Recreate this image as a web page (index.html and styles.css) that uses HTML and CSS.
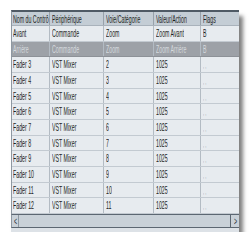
FILE: index.html
```html
<!DOCTYPE html>
<html lang="fr">
<head>
<meta charset="utf-8">
<link rel="stylesheet" href="styles.css">
</head>
<body>
<div class="window">
  <div class="table">
    <div class="row head">
      <div class="cell"><span class="t">Nom du Contrô</span></div>
      <div class="cell"><span class="t">Périphérique</span></div>
      <div class="cell"><span class="t">Voie/Catégorie</span></div>
      <div class="cell"><span class="t">Valeur/Action</span></div>
      <div class="cell"><span class="t">Flags</span></div>
    </div>
    <div class="row">
      <div class="cell"><span class="t">Avant</span></div>
      <div class="cell"><span class="t">Commande</span></div>
      <div class="cell"><span class="t">Zoom</span></div>
      <div class="cell"><span class="t">Zoom Avant</span></div>
      <div class="cell"><span class="t">B</span></div>
    </div>
    <div class="row sel">
      <div class="cell"><span class="t">Arrière</span></div>
      <div class="cell"><span class="t">Commande</span></div>
      <div class="cell"><span class="t">Zoom</span></div>
      <div class="cell"><span class="t">Zoom Arrière</span></div>
      <div class="cell"><span class="t">B</span></div>
    </div>
    <div class="row"><div class="cell"><span class="t">Fader 3</span></div><div class="cell"><span class="t">VST Mixer</span></div><div class="cell"><span class="t">2</span></div><div class="cell"><span class="t">1025</span></div><div class="cell"><span class="t f">, ,</span></div></div>
    <div class="row"><div class="cell"><span class="t">Fader 4</span></div><div class="cell"><span class="t">VST Mixer</span></div><div class="cell"><span class="t">3</span></div><div class="cell"><span class="t">1025</span></div><div class="cell"><span class="t f">, ,</span></div></div>
    <div class="row"><div class="cell"><span class="t">Fader 5</span></div><div class="cell"><span class="t">VST Mixer</span></div><div class="cell"><span class="t">4</span></div><div class="cell"><span class="t">1025</span></div><div class="cell"><span class="t f">, ,</span></div></div>
    <div class="row"><div class="cell"><span class="t">Fader 6</span></div><div class="cell"><span class="t">VST Mixer</span></div><div class="cell"><span class="t">5</span></div><div class="cell"><span class="t">1025</span></div><div class="cell"><span class="t f">, ,</span></div></div>
    <div class="row"><div class="cell"><span class="t">Fader 7</span></div><div class="cell"><span class="t">VST Mixer</span></div><div class="cell"><span class="t">6</span></div><div class="cell"><span class="t">1025</span></div><div class="cell"><span class="t f">, ,</span></div></div>
    <div class="row"><div class="cell"><span class="t">Fader 8</span></div><div class="cell"><span class="t">VST Mixer</span></div><div class="cell"><span class="t">7</span></div><div class="cell"><span class="t">1025</span></div><div class="cell"><span class="t f">, ,</span></div></div>
    <div class="row"><div class="cell"><span class="t">Fader 9</span></div><div class="cell"><span class="t">VST Mixer</span></div><div class="cell"><span class="t">8</span></div><div class="cell"><span class="t">1025</span></div><div class="cell"><span class="t f">, ,</span></div></div>
    <div class="row"><div class="cell"><span class="t">Fader 10</span></div><div class="cell"><span class="t">VST Mixer</span></div><div class="cell"><span class="t">9</span></div><div class="cell"><span class="t">1025</span></div><div class="cell"><span class="t f">, ,</span></div></div>
    <div class="row"><div class="cell"><span class="t">Fader 11</span></div><div class="cell"><span class="t">VST Mixer</span></div><div class="cell"><span class="t">10</span></div><div class="cell"><span class="t">1025</span></div><div class="cell"><span class="t f">, ,</span></div></div>
    <div class="row"><div class="cell"><span class="t">Fader 12</span></div><div class="cell"><span class="t">VST Mixer</span></div><div class="cell"><span class="t">11</span></div><div class="cell"><span class="t">1025</span></div><div class="cell"><span class="t f">, ,</span></div></div>
  </div>
  <div class="scroll">
    <div class="btn left"><span class="t">&lt;</span></div>
    <div class="track"></div>
    <div class="btn right"><span class="t">&gt;</span></div>
  </div>
</div>
</body>
</html>
```
FILE: styles.css
```css
html, body {
  margin: 0;
  padding: 0;
  background: #ffffff;
}
body {
  font-family: "Liberation Sans", Arial, sans-serif;
  font-size: 10.5px;
  color: #1c1f22;
}
.window {
  margin: 10px 0 0 11px;
  width: 228px;
  height: 222px;
  box-sizing: border-box;
  background: #dde2e7;
  box-shadow: 4px 6px 4px rgba(0, 0, 0, 0.5);
  display: flex;
  flex-direction: column;
}
.table {
  border-top: 2px solid #4f5a65;
  border-left: 1px solid #8e98a2;
}
.row {
  display: grid;
  grid-template-columns: 38px 54px 50px 47px 1fr;
  height: 15.67px;
  box-sizing: border-box;
  border-bottom: 1px solid #c3cad1;
  background: #e7ebef;
}
.row.head {
  height: 14px;
  background: #c4cdd5;
  border-bottom: 1px solid #a9b2bb;
}
.row.sel {
  background: #9da1a7;
  color: #d6dade;
  border-bottom-color: #8d9197;
}
.cell {
  border-right: 1px solid #b3bbc3;
  padding-left: 2px;
  overflow: hidden;
  white-space: nowrap;
  line-height: 15px;
}
.cell:first-child {
  padding-left: 1px;
}
.head .cell {
  line-height: 14px;
  border-right-color: #98a1aa;
}
.cell:last-child {
  border-right: none;
}
.t {
  display: inline-block;
  transform: scaleX(0.5);
  transform-origin: left center;
}
.t.f {
  color: #9aa0a6;
  font-size: 8px;
}
.scroll {
  margin-top: auto;
  margin-bottom: 4px;
  height: 14px;
  box-sizing: border-box;
  border-top: 1px solid #5c6772;
  border-bottom: 1px solid #5c6772;
  border-left: 1px solid #8e98a2;
  background: #c9d1d8;
  display: flex;
}
.btn {
  line-height: 12px;
  color: #2a2f34;
  overflow: hidden;
}
.btn.left {
  width: 7px;
  border-right: 1px solid #8e98a2;
  padding-left: 2px;
  box-sizing: border-box;
}
.btn.right {
  width: 9px;
  border-left: 1px solid #5c6772;
  padding-left: 3px;
  box-sizing: border-box;
}
.track {
  flex: 1;
}
```
